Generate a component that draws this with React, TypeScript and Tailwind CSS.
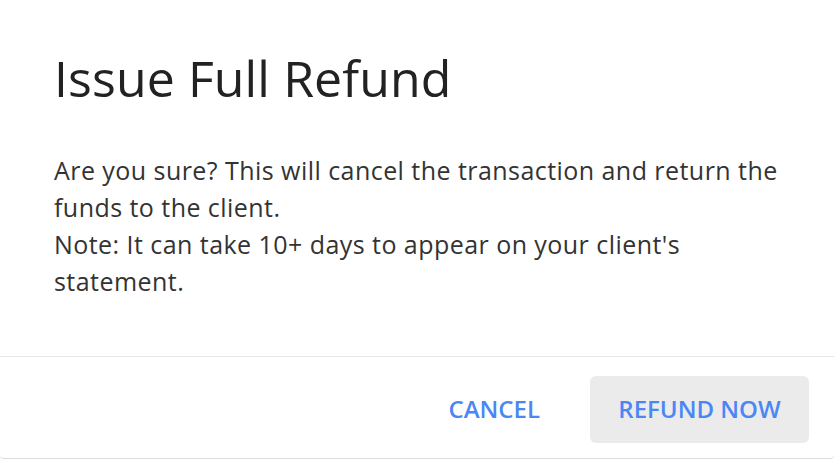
export default function App() {
  return (
    <div className="w-[834px] h-[460px] bg-white overflow-hidden font-['Open_Sans',sans-serif]">
      <div className="h-[459px] border-b border-[#dcdcdc] rounded-[4px] flex flex-col">
        {/* Body */}
        <div className="px-[54px] pt-[53px] pb-[56px] border-b border-[#e6e6e6]">
          <h1 className="text-[50px] leading-none font-normal tracking-[0.1px] text-[#222222]">
            Issue Full Refund
          </h1>
          <p className="mt-[49px] text-[25px] leading-[37px] tracking-[0.45px] text-[#333333]">
            Are you sure? This will cancel the transaction and return the funds to the client.
            <br />
            Note: It can take 10+ days to appear on your client's statement.
          </p>
        </div>
        {/* Footer */}
        <div className="flex-1 flex flex-row items-center justify-end gap-[24px] pr-[25px] pt-[3px]">
          <button className="h-[67px] px-[26px] rounded-[6px] text-[24px] font-semibold text-[#4a87f5] bg-transparent">
            CANCEL
          </button>
          <button className="h-[67px] w-[219px] rounded-[6px] text-[24px] font-semibold text-[#4a87f5] bg-[#ebebeb]">
            REFUND NOW
          </button>
        </div>
      </div>
    </div>
  );
}
